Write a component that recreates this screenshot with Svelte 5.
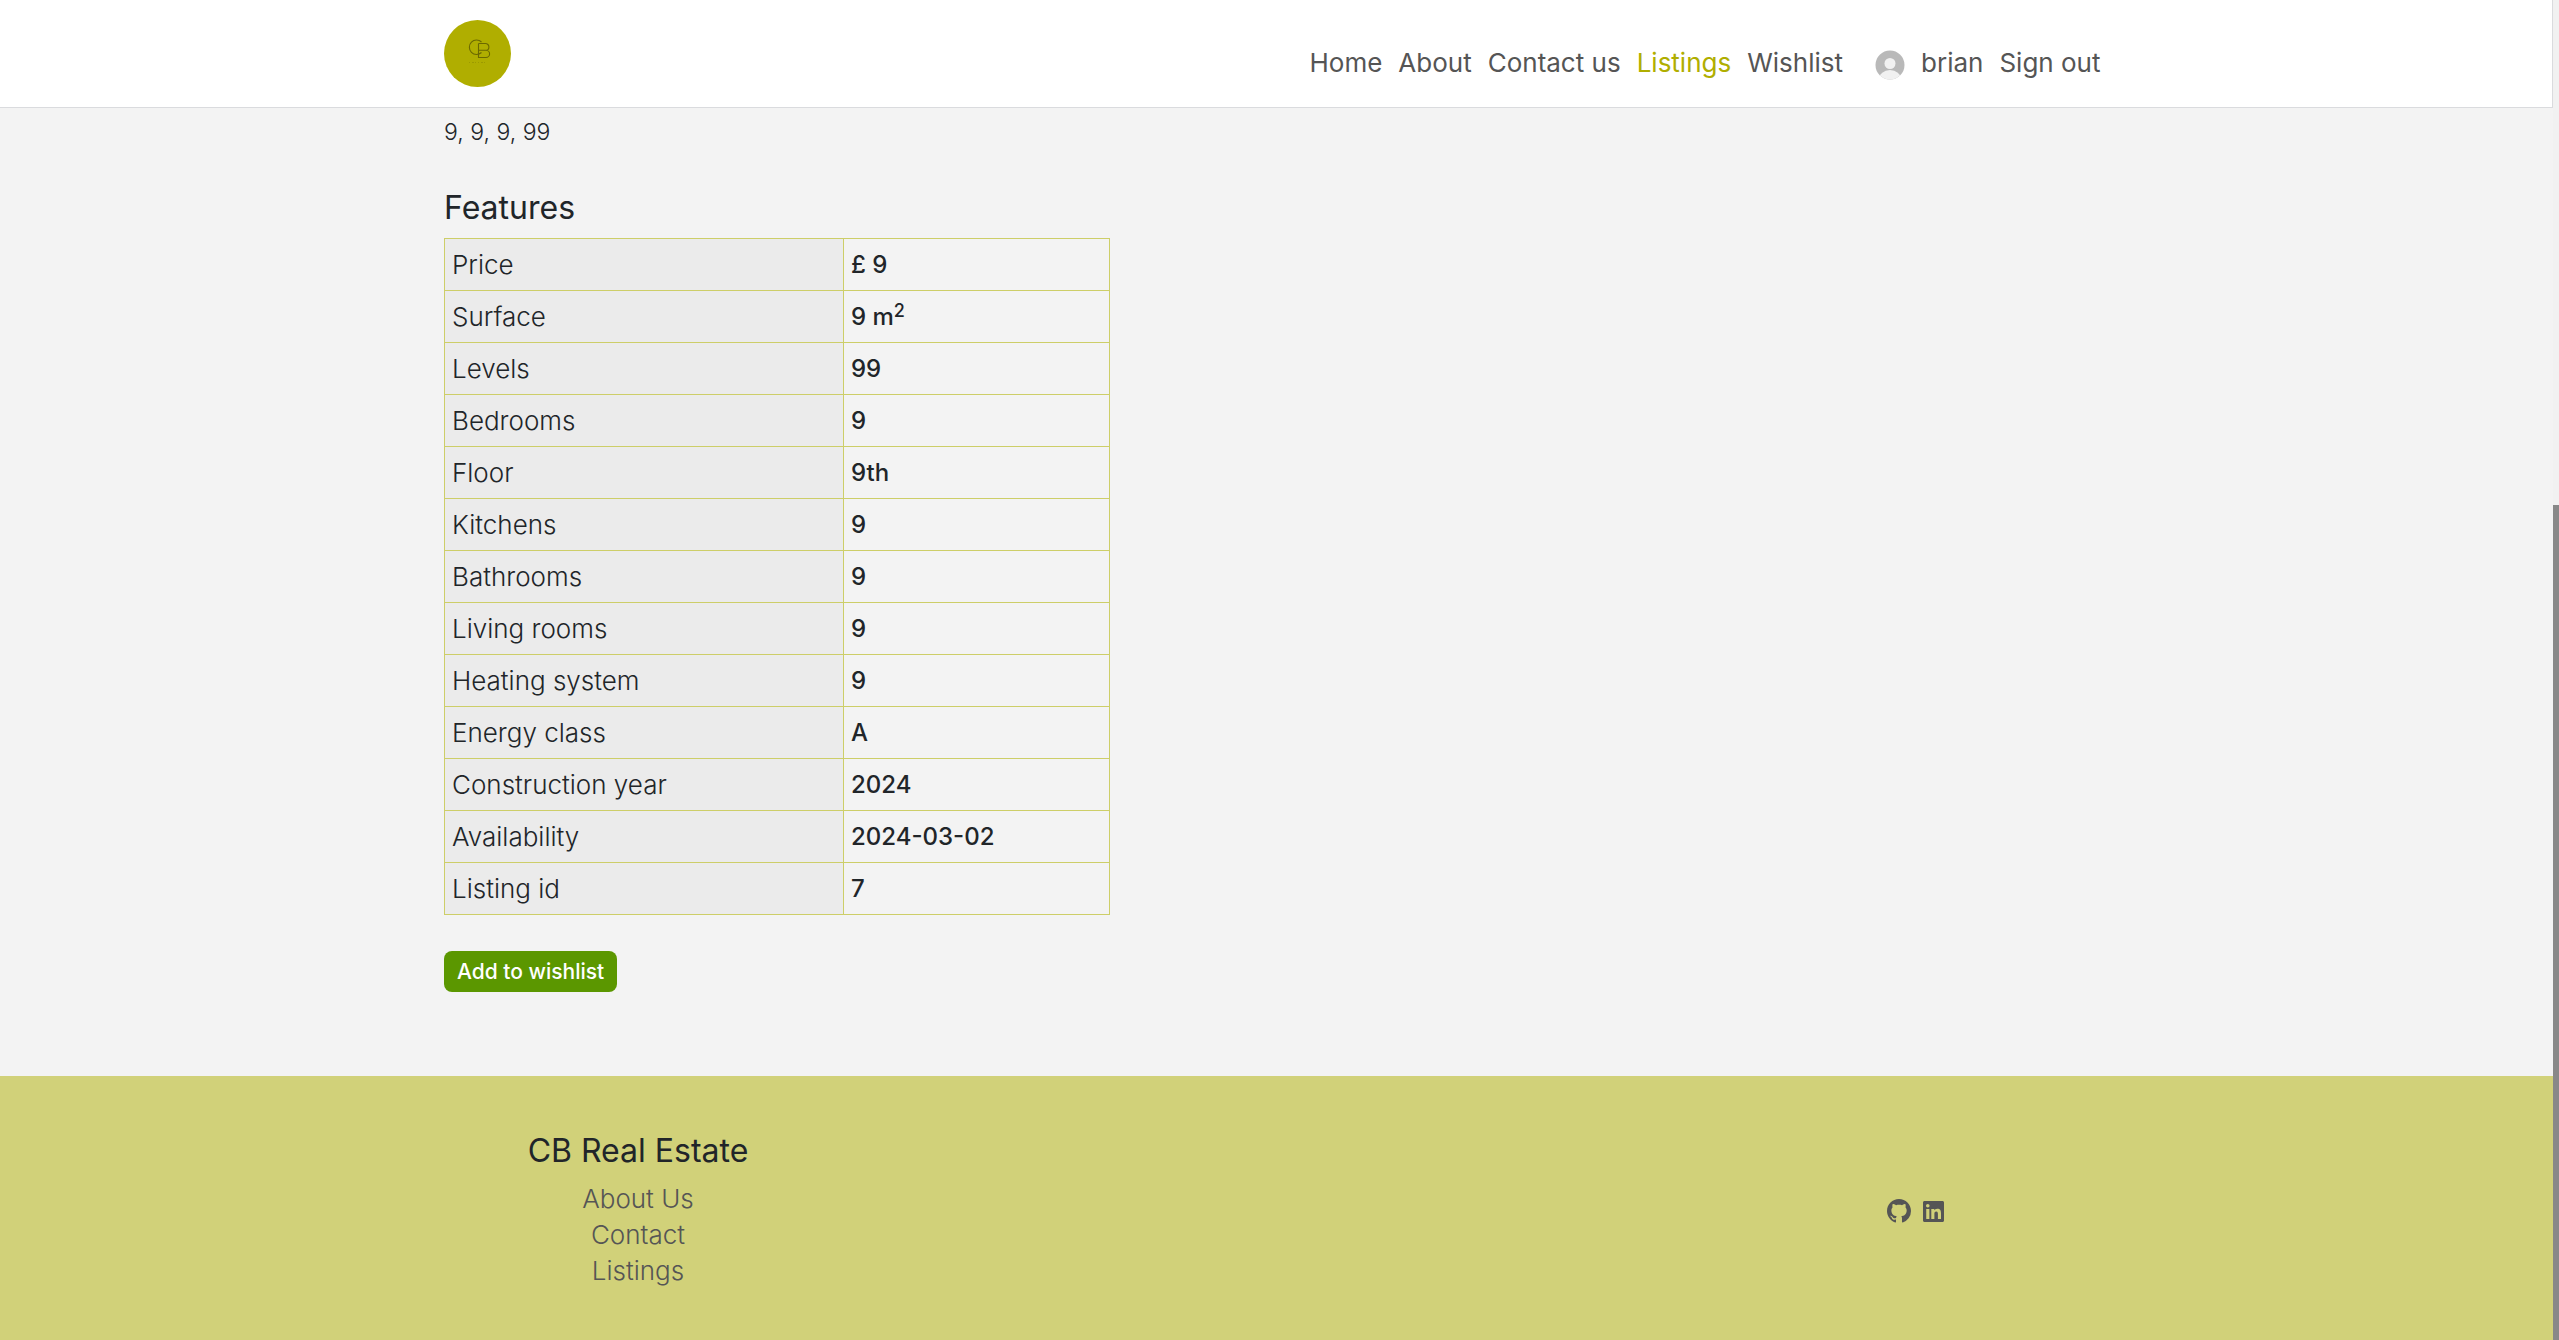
<script>
  const links = [
    { label: 'Home' },
    { label: 'About' },
    { label: 'Contact us' },
    { label: 'Listings', active: true },
    { label: 'Wishlist' }
  ];

  const features = [
    ['Price', '£ 9'],
    ['Surface', '9 m', '2'],
    ['Levels', '99'],
    ['Bedrooms', '9'],
    ['Floor', '9th'],
    ['Kitchens', '9'],
    ['Bathrooms', '9'],
    ['Living rooms', '9'],
    ['Heating system', '9'],
    ['Energy class', 'A'],
    ['Construction year', '2024'],
    ['Availability', '2024-03-02'],
    ['Listing id', '7']
  ];
</script>

<div class="shell">
  <div class="page">
    <header>
      <div class="container bar">
        <a class="logo" href="#home" aria-label="CB Real Estate">
          <svg viewBox="0 0 67 67" aria-hidden="true">
            <circle cx="33.5" cy="33.5" r="33.5" fill="#b0ae00" />
            <g fill="none" stroke="#6b6900" stroke-width="1.1">
              <path d="M37.5 22 A7.2 7.2 0 1 0 37.5 32.5" />
              <path d="M34.5 23.5 V37.5 H42 A3.6 3.6 0 0 0 42 30.3 H35 M34.5 23.5 H41.5 A3.4 3.4 0 0 1 41.5 30.3" />
            </g>
            <path d="M25 42.5 H42" stroke="#8f8d00" stroke-width="1" stroke-dasharray="1 2 2 1 1 2" opacity=".6" />
          </svg>
        </a>
        <nav aria-label="Main">
          {#each links as link}
            <a href="#{link.label}" class:active={link.active}>{link.label}</a>
          {/each}
          <a class="user" href="#profile">
            <svg viewBox="0 0 30 30" aria-hidden="true">
              <clipPath id="round"><circle cx="15" cy="15" r="14.5" /></clipPath>
              <g clip-path="url(#round)">
                <rect width="30" height="30" fill="#b9b9b9" />
                <ellipse cx="15" cy="29" rx="11" ry="9" fill="#f1f1f1" />
                <circle cx="15" cy="13.5" r="6.5" fill="#b9b9b9" />
                <circle cx="15" cy="13.5" r="5.5" fill="#f1f1f1" />
              </g>
            </svg>
            brian
          </a>
          <a href="#signout">Sign out</a>
        </nav>
      </div>
    </header>

    <main>
      <div class="container">
        <p>9, 9, 9, 99</p>
        <h2>Features</h2>
        <table>
          <tbody>
            {#each features as [name, value, power]}
              <tr>
                <th scope="row">{name}</th>
                <td>{value}{#if power}<sup>{power}</sup>{/if}</td>
              </tr>
            {/each}
          </tbody>
        </table>
        <button type="button">Add to wishlist</button>
      </div>
    </main>

    <footer>
      <div class="container foot">
        <section>
          <h2>CB Real Estate</h2>
          <a href="#about">About Us</a>
          <a href="#contact">Contact</a>
          <a href="#listings">Listings</a>
        </section>
        <div class="social">
          <a href="#github" aria-label="GitHub">
            <svg viewBox="0 0 16 16" aria-hidden="true"><path d="M8 0C3.58 0 0 3.58 0 8c0 3.54 2.29 6.53 5.47 7.59.4.07.55-.17.55-.38 0-.19-.01-.82-.01-1.49-2.01.37-2.53-.49-2.69-.94-.09-.23-.48-.94-.82-1.13-.28-.15-.68-.52-.01-.53.63-.01 1.08.58 1.23.82.72 1.21 1.87.87 2.33.66.07-.52.28-.87.51-1.07-1.78-.2-3.64-.89-3.64-3.95 0-.87.31-1.59.82-2.15-.08-.2-.36-1.02.08-2.12 0 0 .67-.21 2.2.82.64-.18 1.32-.27 2-.27s1.36.09 2 .27c1.53-1.04 2.2-.82 2.2-.82.44 1.1.16 1.92.08 2.12.51.56.82 1.27.82 2.15 0 3.07-1.87 3.75-3.65 3.95.29.25.54.73.54 1.48 0 1.07-.01 1.93-.01 2.2 0 .21.15.46.55.38A8.01 8.01 0 0 0 16 8c0-4.42-3.58-8-8-8z" /></svg>
          </a>
          <a href="#linkedin" aria-label="LinkedIn">
            <svg class="in" viewBox="0 0 448 448" aria-hidden="true"><path d="M416 0H32C14 0 0 15 0 33v382c0 18 14 33 32 33h384c18 0 32-15 32-33V33c0-18-14-33-32-33zM135 384H69V170h67v214zM102 141a38 38 0 1 1 0-77 38 38 0 0 1 0 77zm282 243h-66V280c0-25-1-57-35-57s-40 27-40 55v106h-66V170h64v29h1c9-17 30-35 63-35 67 0 79 44 79 102v118z" /></svg>
          </a>
        </div>
      </div>
    </footer>
  </div>
  <div class="track" aria-hidden="true"><div class="thumb"></div></div>
</div>

<style>
  :global(body) {
    background: #f3f3f3;
  }
  .shell {
    display: grid;
    grid-template-columns: 1fr 6px;
    min-height: 100vh;
    font: 300 26px/36px Inter, sans-serif;
    color: #212529;
  }
  .page {
    display: flex;
    flex-direction: column;
  }
  .container {
    box-sizing: border-box;
    width: 100%;
    max-width: 1709px;
    margin: 0 auto;
    padding: 0 22px;
  }
  a {
    color: #555;
    text-decoration: none;
  }
  header {
    background: #fff;
    border: solid #dadbde;
    border-width: 0 1px 1px 0;
  }
  .bar {
    display: flex;
    justify-content: space-between;
    align-items: flex-start;
    padding-top: 20px;
    padding-bottom: 20px;
  }
  .logo,
  .logo svg {
    display: block;
    width: 67px;
    height: 67px;
  }
  nav {
    display: flex;
    gap: 16px;
    padding: 25px 8px 0 0;
    font-weight: 400;
  }
  nav .active {
    color: #b0ae00;
  }
  .user {
    display: flex;
    align-items: center;
    gap: 16px;
    margin-left: 16px;
  }
  .user svg {
    width: 30px;
    height: 30px;
    margin-top: 4px;
  }
  main {
    padding: 6px 0 84px;
  }
  p {
    margin: 0 0 40px;
    font-size: 23px;
  }
  h2 {
    margin: 0 0 12px;
    font-size: 32px;
    line-height: 36px;
    font-weight: 400;
  }
  table {
    width: 40%;
    table-layout: fixed;
    border-collapse: collapse;
    margin-bottom: 36px;
  }
  th,
  td {
    height: 51px;
    padding: 0 7px;
    border: 1px solid #cdce68;
    text-align: left;
  }
  th {
    width: 60%;
    box-sizing: border-box;
    background: #ebebeb;
    font-weight: 300;
  }
  td {
    font-size: 24px;
    font-weight: 500;
  }
  sup {
    font-size: 18px;
    line-height: 0;
    vertical-align: 8px;
  }
  button {
    display: block;
    height: 41px;
    padding: 0 13px;
    border: 0;
    border-radius: 8px;
    background: #5b9700;
    color: #fff;
    font: 500 21px/41px Inter, sans-serif;
  }
  footer {
    flex: 1;
    background: #d1d179;
  }
  .foot {
    display: flex;
    justify-content: space-between;
    padding-top: 57px;
    padding-bottom: 48px;
  }
  section,
  .social {
    flex: 0 0 388px;
    display: flex;
  }
  section {
    flex-direction: column;
    align-items: center;
  }
  .social {
    align-items: center;
    justify-content: center;
    gap: 12px;
  }
  .social svg {
    display: block;
    width: 24px;
    height: 24px;
    fill: #555;
  }
  .social .in {
    width: 21px;
    height: 21px;
  }
  .track {
    display: flex;
    align-items: flex-end;
    background: #f1f1f1;
  }
  .thumb {
    width: 100%;
    height: 62.3%;
    background: #888;
  }
</style>
